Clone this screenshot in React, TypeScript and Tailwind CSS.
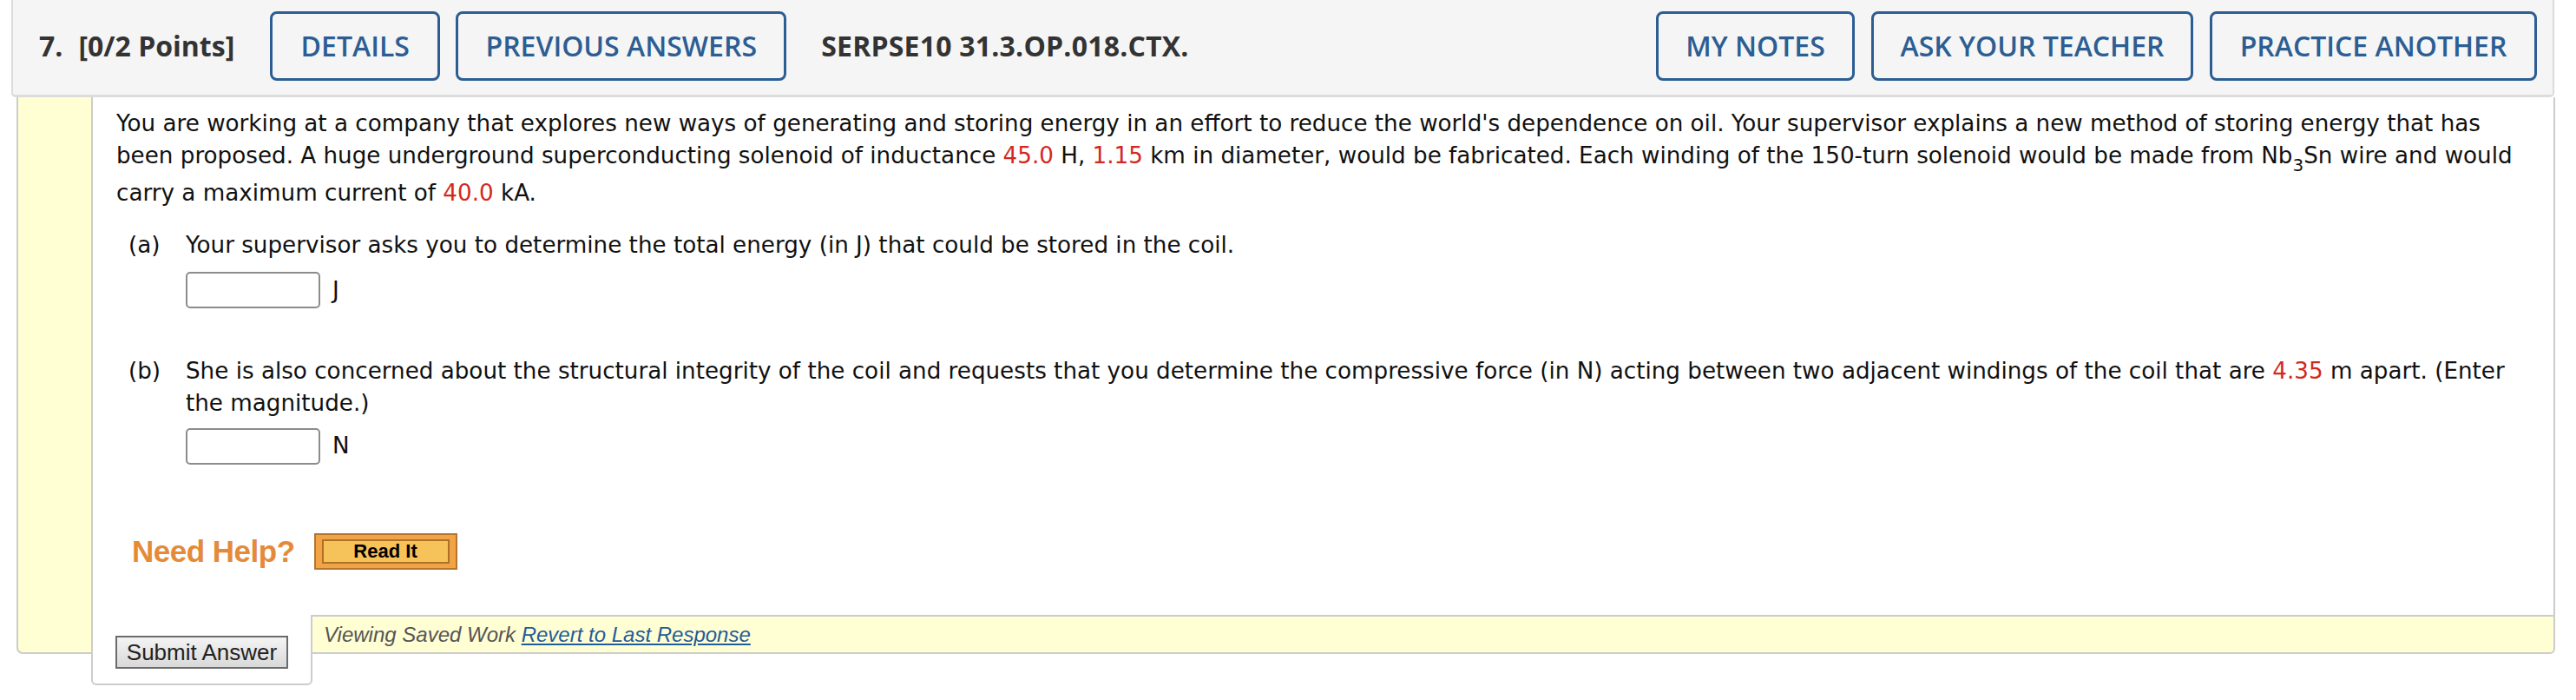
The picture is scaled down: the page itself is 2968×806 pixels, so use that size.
import React from 'react';

const blueBtn =
  'h-[80px] shrink-0 flex items-center justify-center border-[3px] border-[#2c5e93] rounded-[8px] text-[#2c5e93] text-[32px] font-semibold';

const Red: React.FC<{ children: React.ReactNode }> = ({ children }) => (
  <span className="text-[#d4281f]">{children}</span>
);

const AnswerBox: React.FC<{ unit: string; top: string }> = ({ unit, top }) => (
  <div className={`flex items-center ${top}`}>
    <input
      type="text"
      className="w-[155px] h-[42px] border-2 border-[#8c8c8c] rounded-[5px] bg-white outline-none"
    />
    <span className="ml-[14px]">{unit}</span>
  </div>
);

export default function App() {
  return (
    <div className="w-[2968px] h-[806px] bg-white relative">
      {/* Question header */}
      <div
        className="ml-[13px] w-[2930px] h-[112px] bg-[#f5f5f5] border-l-2 border-r-2 border-b-[3px] border-[#dcdcdc] rounded-b-[5px] pt-[13px] pl-[30px] pr-[18px]"
        style={{ fontFamily: '"Open Sans", sans-serif' }}
      >
        <div className="h-[80px] flex items-center">
          <div className="text-[32px] font-bold text-[#333] whitespace-nowrap">
            <span className="mr-[18px]">7.</span>[0/2 Points]
          </div>
          <button className={`${blueBtn} ml-[41px] w-[196px]`}>DETAILS</button>
          <button className={`${blueBtn} ml-[18px] w-[381px]`}>PREVIOUS ANSWERS</button>
          <div className="ml-[40px] text-[32px] font-bold text-[#333] whitespace-nowrap tracking-[0.2px]">
            SERPSE10 31.3.OP.018.CTX.
          </div>
          <div className="ml-auto flex gap-[19px]">
            <button className={`${blueBtn} w-[229px]`}>MY NOTES</button>
            <button className={`${blueBtn} w-[371px]`}>ASK YOUR TEACHER</button>
            <button className={`${blueBtn} w-[377px]`}>PRACTICE ANOTHER</button>
          </div>
        </div>
      </div>

      {/* Question body */}
      <div className="ml-[19px] w-[2925px] flex">
        <div className="w-[86px] shrink-0 bg-[#ffffd3] border-l-2 border-b-2 border-[#cccccc] rounded-bl-[7px]" />
        <div className="flex-1 flex flex-col">
          <div
            className="border-l-2 border-r-2 border-[#cccccc] pl-[27px] pr-[37px] pt-[12px] pb-[49px] text-[26.2px] leading-[1.41] text-[#111]"
            style={{ fontFamily: '"DejaVu Sans", Verdana, sans-serif' }}
          >
            <p>
              You are working at a company that explores new ways of generating and storing energy in an effort to
              reduce the world's dependence on oil. Your supervisor explains a new method of storing energy that has
              been proposed. A huge underground superconducting solenoid of inductance <Red>45.0</Red> H,{' '}
              <Red>1.15</Red> km in diameter, would be fabricated. Each winding of the 150-turn solenoid would be made
              from Nb
              <sub className="static align-[-9px] text-[20px] leading-[1.41]">3</sub>
              Sn wire and would carry a maximum current of <Red>40.0</Red> kA.
            </p>

            {/* part a */}
            <div className="flex pl-[14px] mt-[23px]">
              <div className="w-[66px] shrink-0">(a)</div>
              <div className="flex-1">
                <div>Your supervisor asks you to determine the total energy (in J) that could be stored in the coil.</div>
                <AnswerBox unit="J" top="mt-[12px]" />
              </div>
            </div>

            {/* part b */}
            <div className="flex pl-[14px] mt-[54px]">
              <div className="w-[66px] shrink-0">(b)</div>
              <div className="flex-1">
                <div>
                  She is also concerned about the structural integrity of the coil and requests that you determine the
                  compressive force (in N) acting between two adjacent windings of the coil that are <Red>4.35</Red> m
                  apart. (Enter the magnitude.)
                </div>
                <AnswerBox unit="N" top="mt-[10px]" />
              </div>
            </div>

            {/* help */}
            <div
              className="flex items-center mt-[75px] ml-[18px]"
              style={{ fontFamily: '"Liberation Sans", Arial, sans-serif' }}
            >
              <span className="text-[35px] font-bold text-[#e48a38] tracking-[-0.5px]">Need Help?</span>
              <button className="ml-[22px] w-[165px] h-[42px] border-2 border-[#b5752f] bg-[#f0a446] px-[7px] py-[5px]">
                <span className="h-full flex items-center justify-center border-2 border-[#b07028] bg-[#f6c25a] text-[22px] font-bold text-black leading-none">
                  Read It
                </span>
              </button>
            </div>
          </div>

          {/* submit row */}
          <div className="flex" style={{ fontFamily: '"Liberation Sans", Arial, sans-serif' }}>
            <div className="w-[255px] h-[81px] -mb-[36px] shrink-0 bg-white border-l-2 border-r-2 border-b-2 border-[#cccccc] rounded-b-[6px] pl-[26px] pt-[24px]">
              <button className="w-[199px] h-[38px] border-2 border-[#6b6b6b] bg-gradient-to-b from-[#f4f4f4] to-[#d9d9d9] text-[26px] text-[#222] leading-none">
                Submit Answer
              </button>
            </div>
            <div className="flex-1 h-[45px] bg-[#ffffd3] border-t-2 border-b-2 border-r-2 border-[#cccccc] rounded-br-[6px] flex items-center pl-[13px] text-[24px] italic text-[#555]">
              Viewing Saved Work&nbsp;
              <a href="#" className="text-[#1f5c9c] underline">
                Revert to Last Response
              </a>
            </div>
          </div>
        </div>
      </div>
    </div>
  );
}
